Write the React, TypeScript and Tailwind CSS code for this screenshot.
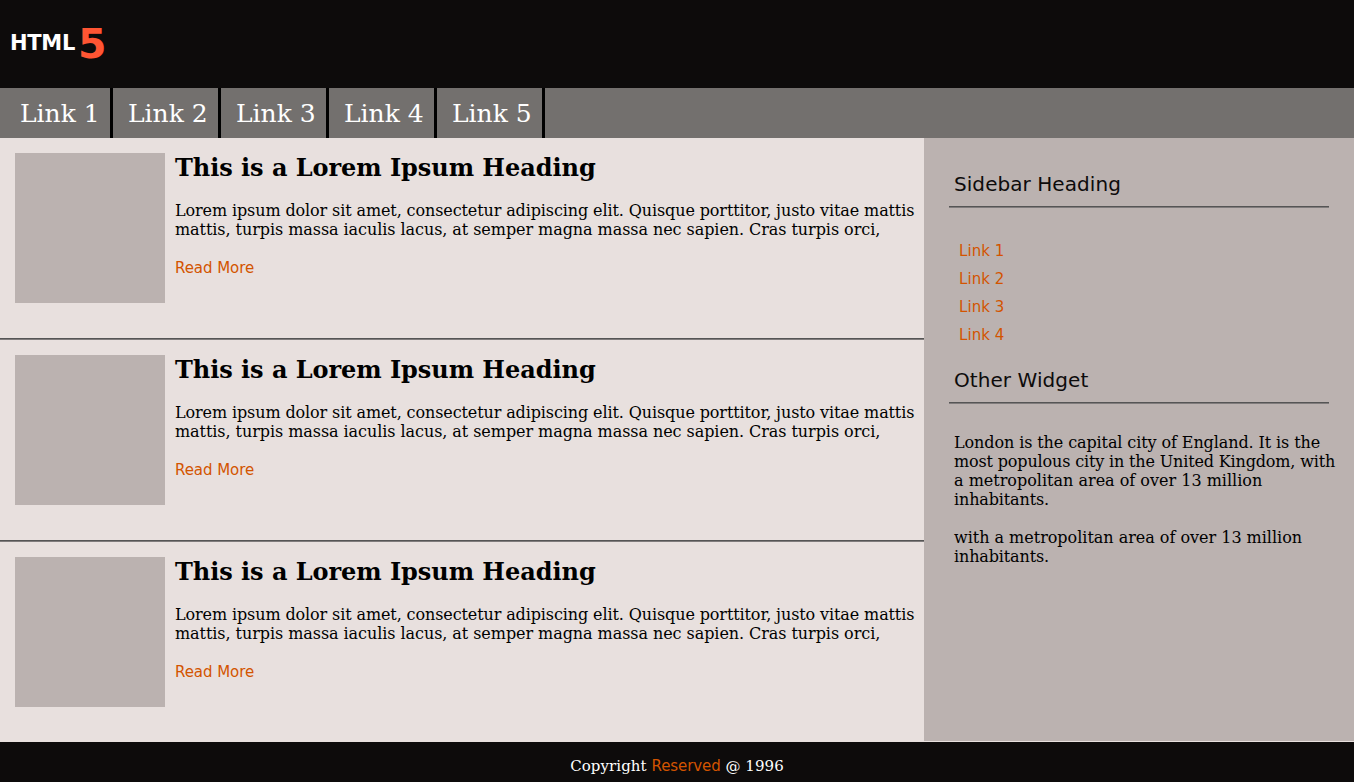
const navLinks = ['Link 1', 'Link 2', 'Link 3', 'Link 4', 'Link 5'];
const sideLinks = ['Link 1', 'Link 2', 'Link 3', 'Link 4'];

function Article() {
  return (
    <article className="h-[202px]">
      <div className="flex h-[200px] pl-[15px] pt-[15px]">
        <div className="h-[150px] w-[150px] shrink-0 bg-[#bbb2b0]" />
        <div className="whitespace-nowrap pl-[10px]">
          <h2 className="pt-px text-[24px] font-bold leading-[28px] tracking-[-0.05px]">This is a Lorem Ipsum Heading</h2>
          <p className="mt-[19px] text-[16px] leading-[19px] tracking-[-0.063px]">
            <span className="tracking-[-0.112px]">
              Lorem ipsum dolor sit amet, consectetur adipiscing elit. Quisque porttitor, justo vitae mattis
            </span>
            <br />
            mattis, turpis massa iaculis lacus, at semper magna massa nec sapien. Cras turpis orci,
          </p>
          <a className="mt-[20px] block font-['DejaVu_Sans',sans-serif] text-[15px] leading-[19px] tracking-[-0.06px] text-[#d35400]">Read More</a>
        </div>
      </div>
      <div className="h-[2px] border-t border-[#555555] bg-[#807c7c]" />
    </article>
  );
}

function WidgetHeading({ children }: { children: string }) {
  return (
    <div className="ml-[25px] w-[380px]">
      <h3 className="pb-[10px] pl-[5px] font-['DejaVu_Sans',sans-serif] text-[20px] leading-[24px] tracking-[0.06px] text-[#0d0b0b]">
        {children}
      </h3>
      <div className="h-[2px] border-t border-[#555555] bg-[#807c7c]" />
    </div>
  );
}

export default function App() {
  return (
    <div className="flex h-[782px] w-full flex-col overflow-hidden bg-[#e8e0de] font-['DejaVu_Serif',serif] text-black">
      <header className="flex h-[88px] items-start bg-[#0d0b0b] pl-[10px] font-['DejaVu_Sans',sans-serif] font-bold">
        <span className="pt-[20px] text-[21px] leading-[47px] tracking-[-0.3px] text-white">HTML</span>
        <span className="ml-[3px] pt-[21px] text-[41px] leading-[47px] text-[#ff5533]">5</span>
      </header>
      <nav className="flex h-[50px] bg-[#73706e] pl-[5px]">
        {navLinks.map((label) => (
          <a key={label} className="flex w-[108px] items-center whitespace-nowrap border-r-[3px] border-black pl-[15px] pt-px text-[25px] text-white">
            {label}
          </a>
        ))}
      </nav>
      <div className="flex h-[604px]">
        <main className="h-[604px] w-[924px] overflow-hidden">
          <Article />
          <Article />
          <Article />
        </main>
        <aside className="h-[603px] w-[430px] bg-[#bbb2b0] pt-[34px]">
          <WidgetHeading>Sidebar Heading</WidgetHeading>
          <ul className="ml-[35px] mt-[29px]">
            {sideLinks.map((label) => (
              <li key={label} className="h-7 font-['DejaVu_Sans',sans-serif] text-[15px] leading-[28px] tracking-[0.06px] text-[#d35400]">{label}</li>
            ))}
          </ul>
          <div className="mt-[19px]">
            <WidgetHeading>Other Widget</WidgetHeading>
          </div>
          <div className="ml-[30px] mt-[29px] whitespace-nowrap text-[16px] leading-[19px]">
            <p>
              <span className="tracking-[-0.1px]">London is the capital city of England. It is the</span>
              <br />
              <span className="tracking-[-0.155px]">most populous city in the United Kingdom, with</span>
              <br />
              a metropolitan area of over 13 million
              <br />
              <span className="tracking-[-0.14px]">inhabitants.</span>
            </p>
            <p className="mt-[19px]">
              <span className="tracking-[-0.02px]">with a metropolitan area of over 13 million</span>
              <br />
              <span className="tracking-[-0.14px]">inhabitants.</span>
            </p>
          </div>
        </aside>
      </div>
      <footer className="h-10 bg-[#0d0b0b] pt-[15px] text-center text-[15px] leading-[18px] tracking-[0.08px] text-white">
        Copyright <a className="font-['DejaVu_Sans',sans-serif] tracking-[-0.1px] text-[#d35400]">Reserved</a> @ 1996
      </footer>
    </div>
  );
}
